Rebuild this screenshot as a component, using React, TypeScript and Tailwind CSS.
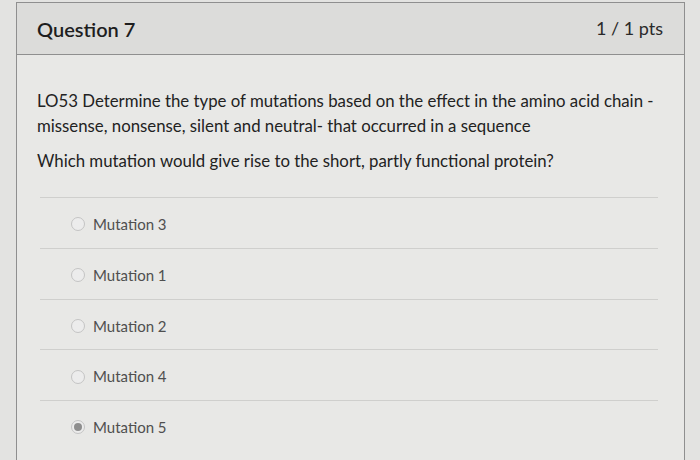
const answers = [
  { label: "Mutation 3", selected: false },
  { label: "Mutation 1", selected: false },
  { label: "Mutation 2", selected: false },
  { label: "Mutation 4", selected: false },
  { label: "Mutation 5", selected: true },
];

function Radio({ selected }: { selected: boolean }) {
  return (
    <span className="flex h-[14px] w-[14px] items-center justify-center rounded-full border border-[#c4c4c4] bg-[#ececec]">
      {selected && <span className="h-[8px] w-[8px] rounded-full bg-[#8e8e8e]" />}
    </span>
  );
}

export default function App() {
  return (
    <div
      className="h-[460px] w-[700px] overflow-hidden bg-[#e3e3e1] pt-[2px] pl-[16px]"
      style={{ fontFamily: "Lato, 'Open Sans', sans-serif" }}
    >
      <div className="h-[470px] w-[669px] border-x border-t border-[#8f8f8f] bg-[#e8e8e6]">
        <div className="flex h-[52px] items-center justify-between border-b border-[#8f8f8f] bg-[#dcdcda] pr-[21px] pl-[20px]">
          <span className="text-[20px] font-semibold text-[#1e1e1e]">Question 7</span>
          <span className="text-[18px] text-[#2a2a2a]">1 / 1 pts</span>
        </div>
        <div className="pt-[33px] pl-[20px] pr-[20px] text-[16.8px] text-[#222]">
          <p className="leading-[25px]">
            LO53 Determine the type of mutations based on the effect in the amino acid chain -
            missense, nonsense, silent and neutral- that occurred in a sequence
          </p>
          <p className="mt-[10px] leading-[25px]">
            Which mutation would give rise to the short, partly functional protein?
          </p>
          <div className="mt-[24px] mr-[6px] ml-[3px]">
            {answers.map((a) => (
              <div
                key={a.label}
                className="flex h-[50.75px] items-center gap-[8px] border-t border-[#cfcfcd] pt-[3px] pl-[31px]"
              >
                <Radio selected={a.selected} />
                <span className="text-[15px] text-[#4f4f4f]">{a.label}</span>
              </div>
            ))}
          </div>
        </div>
      </div>
    </div>
  );
}
